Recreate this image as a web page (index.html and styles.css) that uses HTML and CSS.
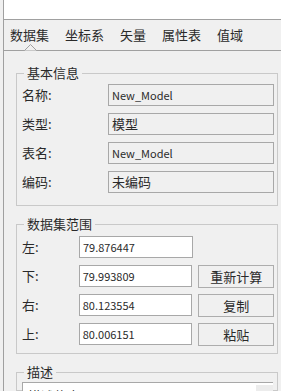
FILE: index.html
```html
<!DOCTYPE html>
<html lang="zh-CN">
<head>
<meta charset="utf-8">
<link rel="stylesheet" href="styles.css">
</head>
<body>
<div class="frame">
  <div class="topbox"></div>
  <div class="tabs">
    <span class="tab active">数据集</span>
    <span class="tab">坐标系</span>
    <span class="tab">矢量</span>
    <span class="tab">属性表</span>
    <span class="tab">值域</span>
    <svg class="caret" width="14" height="8" viewBox="0 0 14 8"><polyline points="0.5,7.5 6.5,1.5 12.5,7.5" fill="#f0f0f0" stroke="#a0a0a0" stroke-width="1"/></svg>
  </div>
  <div class="page">
    <fieldset class="group g1">
      <legend>基本信息</legend>
      <div class="row"><span class="lbl">名称:</span><span class="field ro latin">New_Model</span></div>
      <div class="row"><span class="lbl">类型:</span><span class="field ro">模型</span></div>
      <div class="row"><span class="lbl">表名:</span><span class="field ro latin">New_Model</span></div>
      <div class="row"><span class="lbl">编码:</span><span class="field ro">未编码</span></div>
    </fieldset>
    <fieldset class="group g2">
      <legend>数据集范围</legend>
      <div class="row"><span class="lbl">左:</span><span class="field num latin">79.876447</span></div>
      <div class="row"><span class="lbl">下:</span><span class="field num latin">79.993809</span><span class="btn">重新计算</span></div>
      <div class="row"><span class="lbl">右:</span><span class="field num latin">80.123554</span><span class="btn">复制</span></div>
      <div class="row"><span class="lbl">上:</span><span class="field num latin">80.006151</span><span class="btn">粘贴</span></div>
    </fieldset>
    <fieldset class="group g3">
      <legend>描述</legend>
      <div class="memo"><span class="memo-text">描述信息</span><span class="scroll"></span></div>
    </fieldset>
  </div>
</div>
</body>
</html>
```

FILE: styles.css
```css
html, body {
  margin: 0;
  padding: 0;
  background: #f0f0f0;
}
body {
  width: 281px;
  height: 391px;
  overflow: hidden;
  font-family: "Noto Sans CJK SC", "Noto Sans", sans-serif;
  font-size: 13px;
  color: #2a2a2a;
}
.frame {
  margin-left: 3px;
  border-left: 1px solid #a0a0a0;
  height: 391px;
  overflow: hidden;
}
.topbox {
  height: 19px;
  background: #fff;
  border-bottom: 1px solid #a0a0a0;
}
.tabs {
  position: relative;
  height: 30px;
  border-bottom: 1px solid #a0a0a0;
  display: flex;
  align-items: center;
  gap: 16px;
  padding-left: 6px;
}
.tab {
  line-height: 16px;
  color: #2a2a2a;
}
.caret {
  position: absolute;
  left: 20px;
  top: 23px;
}
.page {
  padding: 15px 3px 0 12px;
}
.group {
  margin: 0;
  padding: 0 3px 0 5px;
  border: 1px solid #c9c9c9;
  min-width: 0;
}
.group legend {
  padding: 0 3px;
  margin-left: 2px;
  line-height: 14px;
  color: #2a2a2a;
}
.row {
  display: flex;
  align-items: center;
  height: 22px;
  margin-top: 7px;
}
.lbl {
  margin-top: -2px;
}
.field {
  box-sizing: border-box;
  height: 22px;
  border: 1px solid #a8a8a8;
  padding: 0 3px;
  display: flex;
  align-items: center;
  line-height: 16px;
}
.latin {
  font-size: 11px;
}
.g1 { padding-bottom: 12px; }
.g1 .lbl { width: 86px; }
.g1 .row:first-of-type { margin-top: 4px; }
.ro {
  width: 166px;
  background: #f0f0f0;
}
.g2 { margin-top: 11px; padding-bottom: 8px; }
.g2 .lbl { width: 57px; }
.g2 .row:first-of-type { margin-top: 5px; }
.num {
  width: 114px;
  background: #fff;
}
.btn {
  box-sizing: border-box;
  margin-left: 6px;
  width: 76px;
  height: 23px;
  border: 1px solid #adadad;
  background: #f0f0f0;
  display: flex;
  align-items: center;
  justify-content: center;
}
.g3 { margin-top: 11px; height: 24px; }
.memo {
  position: relative;
  margin-top: 3px;
  height: 14px;
  background: #fff;
  border: 1px solid #a8a8a8;
  border-bottom: none;
  border-right: none;
  margin-right: 1px;
  padding-left: 5px;
  line-height: 14px;
  padding-top: 6px;
  overflow: hidden;
}
.scroll {
  position: absolute;
  right: 0;
  top: 2px;
  width: 17px;
  height: 30px;
  background: #ececec;
}
```
